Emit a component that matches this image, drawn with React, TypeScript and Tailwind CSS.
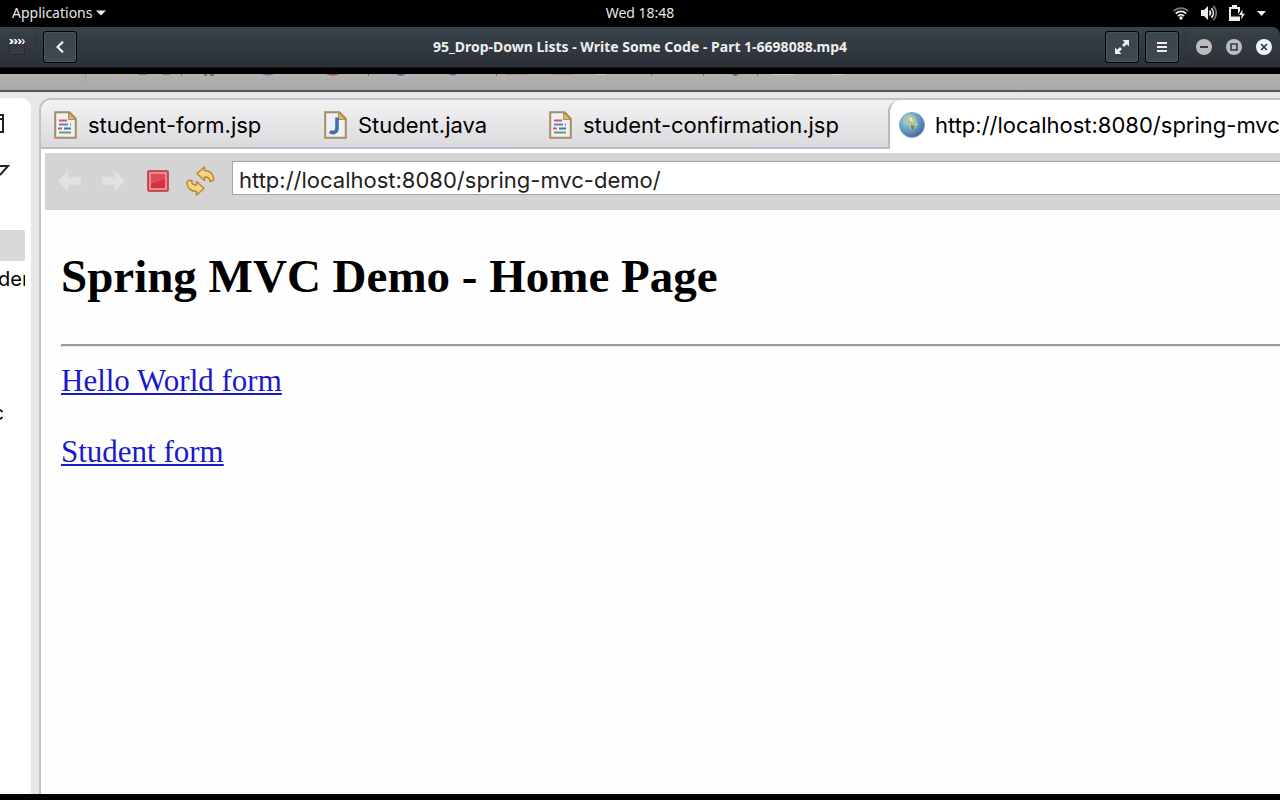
import React from 'react';

function SystemBar() {
  return (
    <header className="grid h-[27px] shrink-0 grid-cols-3 items-center bg-black px-3 pb-px font-['Noto_Sans',sans-serif] text-[14px] leading-5 text-[#e6e6e6]">
      <button type="button" className="flex items-center gap-1 justify-self-start">
        Applications
        <svg width="10" height="6" viewBox="0 0 10 6" fill="#eeeeec" aria-hidden="true">
          <path d="M0 0.5h10L5 5.5z" />
        </svg>
      </button>
      <time className="justify-self-center">Wed 18:48</time>
      <div className="flex items-center gap-3 justify-self-end pr-[2px]">
        <svg width="16" height="13" viewBox="0 0 16 13" fill="none" strokeWidth="1.8" aria-label="Wi-Fi">
          <path d="M0.6 4.2C4.8 0 11.2 0 15.4 4.2" stroke="#777" />
          <path d="M2.8 6.6c3-2.9 7.4-2.9 10.4 0M5 9c1.8-1.7 4.2-1.7 6 0" stroke="#eeeeec" />
          <circle cx="8" cy="11" r="1.7" fill="#eeeeec" />
        </svg>
        <svg width="16" height="16" viewBox="0 0 16 16" fill="none" aria-label="Volume">
          <path d="M0 5h3l4-4v14l-4-4H0z" fill="#eeeeec" />
          <path d="M8.5 5.5c1.2 1.5 1.2 3.5 0 5M10.5 3.2c2.4 2.8 2.4 6.8 0 9.6" stroke="#eeeeec" strokeWidth="1.7" />
          <path d="M12.3 0.8c4 4.2 4 10.2 0 14.4" stroke="#777" strokeWidth="1.7" />
        </svg>
        <svg width="16" height="16" viewBox="0 0 16 16" aria-label="Battery charging">
          <path d="M3 0h5v2h3v4L9 9V4H2v7.500h9V16H0V2h3z" fill="#eeeeec" />
          <path d="M13.500 4.500L10 10h2.600l-.6 4.500L16 8.800h-2.600z" fill="#eeeeec" />
        </svg>
        <svg width="9" height="5" viewBox="0 0 9 5" fill="#eeeeec" aria-hidden="true">
          <path d="M0 0h9L4.500 5z" />
        </svg>
      </div>
    </header>
  );
}

const headerButton =
  'flex h-8 w-[34px] items-center justify-center rounded-[3px] border border-black bg-linear-to-b from-[#3b454e] to-[#404850] shadow-[inset_0_0_0_1px_#4a545d]';

function PlayerHeader() {
  return (
    <div className="bg-black">
      <div className="flex h-10 items-center rounded-tr-lg bg-linear-to-b from-[#394249] to-[#2b3037] px-2">
        <div className="flex flex-1 items-center">
          <svg className="ml-px" width="16" height="16" viewBox="0 0 16 16" aria-hidden="true">
            <rect x="0.5" y="4.500" width="15" height="11" rx="1.5" fill="#3a3a3a" stroke="#292929" />
            <path d="M0 0h2.500L5 2.500 3 5H0l2-2.500zM4.500 0H6.500L9 2.500 7 5H4.500l2-2.500zM8.500 0h2L13 2.500 11 5H8.500l2-2.500zM12.500 0h1.500L16 2.500 14.500 5H12.500l2-2.500z" fill="#eeeeec" />
          </svg>
          <div className="ml-[11px] h-8 w-px bg-[#2d343a]" />
          <button type="button" aria-label="Back" className={`${headerButton} ml-[6px]`}>
            <svg width="8" height="12" viewBox="0 0 8 12" fill="none" stroke="#eeeeec" strokeWidth="2.200">
              <path d="M7 0.700L1.600 6 7 11.300" />
            </svg>
          </button>
        </div>
        <h1 className="font-['Noto_Sans',sans-serif] text-[14px] leading-5 font-bold text-[#eeeeec]">
          95_Drop-Down Lists - Write Some Code - Part 1-6698088.mp4
        </h1>
        <div className="flex flex-1 items-center justify-end">
          <button type="button" aria-label="Fullscreen" className={headerButton}>
            <svg width="14" height="14" viewBox="0 0 14 14" fill="#eeeeec">
              <path d="M7.500 0H14v6.500l-2.200-2.200L9 7 7 5l2.700-2.800zM6.500 14H0V7.500l2.200 2.200L5 7l2 2-2.700 2.800z" />
            </svg>
          </button>
          <button type="button" aria-label="Menu" className={`${headerButton} ml-[6px]`}>
            <svg width="10" height="10" viewBox="0 0 10 10" fill="#eeeeec">
              <path d="M0 0h10v2H0zM0 4h10v2H0zM0 8h10v2H0z" />
            </svg>
          </button>
          <div className="ml-[6px] h-8 w-px bg-[#2d343a]" />
          <div className="ml-[10px] flex gap-[14px]">
            <button type="button" aria-label="Minimize">
              <svg width="16" height="16" viewBox="0 0 16 16">
                <circle cx="8" cy="8" r="8" fill="#bcbcbc" />
                <path d="M4 7h8v2H4z" fill="#343b42" />
              </svg>
            </button>
            <button type="button" aria-label="Maximize">
              <svg width="16" height="16" viewBox="0 0 16 16">
                <circle cx="8" cy="8" r="8" fill="#bcbcbc" />
                <path d="M5 5h6v6H5z" fill="none" stroke="#343b42" strokeWidth="1.600" />
              </svg>
            </button>
            <button type="button" aria-label="Close">
              <svg width="16" height="16" viewBox="0 0 16 16">
                <circle cx="8" cy="8" r="8" fill="#f4f4f4" />
                <path d="M5 5l6 6M11 5l-6 6" stroke="#2e343b" strokeWidth="1.600" />
              </svg>
            </button>
          </div>
        </div>
      </div>
      <div className="h-[7px] border-t border-[#15181c]" />
    </div>
  );
}

function MainToolbarEdge() {
  return (
    <div className="h-[18px] shrink-0 border-b-2 border-[#555] bg-linear-to-b from-[#b3b3b3] to-[#a8a8a8]">
      <svg width="860" height="8" viewBox="0 0 860 8" aria-hidden="true">
        <path d="M85 0h1v8h-1z" fill="#999" />
        <path d="M116 0h9q-4 4-9 0z" fill="#d0a866" />
        <path d="M139 0h8v1h-8zM163 0h7v1h-7zM181 0h1v2h-1zM204 0h3v2h-3zM210 0h4v2h-4zM368 0h1v2h-1zM496 0h1v2h-1zM651 0h1v2h-1zM703 0h1v2h-1zM757 0h1v2h-1z" fill="#777" />
        <path d="M262 0h12q-6 3-12 0z" fill="#777b98" />
        <path d="M326 0h14q-7 3-14 0z" fill="#bd4d5e" />
        <path d="M396 0h10q-5 4-10 0zM449 0h8q-4 3-8 0z" fill="#6b70a5" />
        <path d="M506 0h22v1h-22zM552 0h20v1h-20z" fill="#bb9170" />
        <path d="M595 0h11v1h-11zM771 0h23v1h-23zM832 0h11v1h-11z" fill="#d0ccca" />
        <path d="M732 0h7q-4 4-7 0z" fill="#35836a" />
      </svg>
    </div>
  );
}

function SidePane() {
  return (
    <aside className="w-[31px] shrink-0 overflow-hidden rounded-tr-[10px] bg-white text-[20px] leading-[30px] text-black">
      <svg className="mt-4" width="10" height="64" viewBox="0 0 10 64" fill="none" stroke="#222" strokeWidth="2" aria-hidden="true">
        <path d="M-8 1h11v17H-8M-8 5H3" />
        <path d="M-4 52H8L0 61" />
      </svg>
      <div className="mt-[52px] h-[31px] w-[25px] rounded-r-[2px] bg-[#d8d8d8]" />
      <div className="mt-[3px] w-[25px] overflow-hidden">
        <span className="-ml-[2px]">der</span>
      </div>
      <div className="mt-[104px] flex w-1 justify-end">c</div>
    </aside>
  );
}

function FileIcon({ kind }: { kind: 'jsp' | 'java' }) {
  return (
    <svg className="shrink-0" width="23" height="28" viewBox="0 0 23 28" aria-hidden="true">
      <path d="M1.200 1.200h14.300l6.300 6.500v19.100H1.200z" fill="#eaf1f8" stroke="#a68d5c" strokeWidth="2" />
      <path d="M14.500 1.500v7h7z" fill="#dcb86f" stroke="#b18c4c" />
      {kind === 'jsp' ? (
        <g strokeWidth="1.800">
          <path d="M5 9.500h8" stroke="#d8575c" />
          <path d="M5 13.500h9M16 13.500h1" stroke="#6885a8" />
          <path d="M4 17.500h4" stroke="#d8575c" />
          <path d="M10 17.500h7" stroke="#52739c" />
          <path d="M5 21.500h12" stroke="#58a66d" />
        </g>
      ) : (
        <path d="M13 6.500v10.500c0 4.800-4 5.500-7.200 3.500" fill="none" stroke="#41709f" strokeWidth="3.600" />
      )}
    </svg>
  );
}

function GlobeIcon() {
  return (
    <svg className="shrink-0" width="26" height="26" viewBox="0 0 26 26" aria-hidden="true">
      <defs>
        <radialGradient id="globe" cx="35%" cy="30%" r="75%">
          <stop offset="0" stopColor="#b4dbe0" />
          <stop offset="0.500" stopColor="#6aa6cb" />
          <stop offset="1" stopColor="#4a619f" />
        </radialGradient>
      </defs>
      <circle cx="13" cy="13" r="12.500" fill="url(#globe)" stroke="#7fa3c0" />
      <path d="M8 4l4-1 4 2 1 4 2 3-2 3-3 4-3-3-1-5-4-3z" fill="#b5c597" />
      <path d="M10 5l3 1 1 4-3-1z" fill="#eee6bd" />
      <path d="M12 13l4 1-2 5-2-3z" fill="#6b8a60" />
    </svg>
  );
}

const tabs: { label: string; kind: 'jsp' | 'java'; width: string }[] = [
  { label: 'student-form.jsp', kind: 'jsp', width: 'w-[270px]' },
  { label: 'Student.java', kind: 'java', width: 'w-[225px]' },
  { label: 'student-confirmation.jsp', kind: 'jsp', width: 'w-[352px]' },
];

function EditorTabs() {
  return (
    <div role="tablist" className="flex h-[49px] shrink-0 bg-linear-to-b from-[#f3f2f3] to-[#d9d8dc] text-[22px] leading-7">
      {tabs.map((tab) => (
        <button
          key={tab.label}
          type="button"
          role="tab"
          aria-selected="false"
          className={`${tab.width} flex shrink-0 items-center gap-[11px] border-b-2 border-[#b9b8c6] pt-[3px] pl-[13px] whitespace-nowrap`}
        >
          <FileIcon kind={tab.kind} />
          {tab.label}
        </button>
      ))}
      <button
        type="button"
        role="tab"
        aria-selected="true"
        className="flex min-w-0 flex-1 items-center gap-[10px] overflow-hidden rounded-tl-[12px] border-l-2 border-[#b9b9c2] bg-white pt-px pl-[9px] whitespace-nowrap"
      >
        <GlobeIcon />
        http://localhost:8080/spring-mvc-demo/
      </button>
    </div>
  );
}

function BrowserToolbar() {
  return (
    <div className="mt-1 ml-1 flex h-[57px] shrink-0 items-center bg-[#d4d4d4] pb-px pl-3">
      <button type="button" aria-label="Back" disabled>
        <svg width="26" height="22" viewBox="0 0 26 22">
          <path d="M1 11L11 1v6h13v8H11v6z" fill="#e2e2e2" stroke="#dadada" />
        </svg>
      </button>
      <button type="button" aria-label="Forward" disabled className="ml-[17px]">
        <svg width="26" height="22" viewBox="0 0 26 22">
          <path d="M25 11L15 1v6H2v8h13v6z" fill="#e2e2e2" stroke="#dadada" />
        </svg>
      </button>
      <button type="button" aria-label="Stop" className="ml-[21px]">
        <svg width="22" height="22" viewBox="0 0 22 22">
          <rect x="0.700" y="0.700" width="20.600" height="20.600" rx="1.500" fill="#cc3946" stroke="#c8505a" strokeWidth="1.400" />
          <rect x="3" y="3" width="16" height="16" fill="#d33242" stroke="#f0b0b2" strokeWidth="1.400" />
          <path d="M4 4h14v5L4 14z" fill="#df5862" opacity="0.700" />
        </svg>
      </button>
      <button type="button" aria-label="Refresh" className="ml-[17px]">
        <svg width="29" height="30" viewBox="0 0 29 30" fill="#f5d486" stroke="#bc8732" strokeWidth="1.500" strokeLinejoin="round">
          <path d="M11 7.500L18.500 1v3.500c6 0 9.500 4 9 9.500l-3.500 1.500c0-3-2-4.500-5.500-4.500V14.500z" />
          <path d="M18 22.500L10.500 29v-3.500C4.500 25.500.7 21.500 1 16l1.500-1.500H6c-1 3 1 4.500 4.500 4.500V15.500z" />
        </svg>
      </button>
      <input
        type="text"
        aria-label="Address"
        defaultValue="http://localhost:8080/spring-mvc-demo/"
        className="mt-2 ml-[17px] h-[34px] min-w-0 flex-1 self-start border border-r-0 border-[#a6a6a6] bg-white pt-1 pl-[6px] text-[22px] text-[#222] outline-none"
      />
    </div>
  );
}

function HomePage() {
  return (
    <main className="flex-1 bg-[#fefefe] pt-[38px] pl-5 font-['Liberation_Serif',serif] text-black">
      <h2 className="text-[47px] leading-[56px] font-bold">Spring MVC Demo - Home Page</h2>
      <hr className="mt-10 h-[3px] border-t-2 border-l border-[#9b9b9b] bg-[#ededed]" />
      <div className="mt-4 flex flex-col items-start gap-[35px] text-[31px] leading-9 text-[#1a1acb]">
        <a href="#hello" className="underline decoration-2 underline-offset-2">Hello World form</a>
        <a href="#student" className="underline decoration-2 underline-offset-2">Student form</a>
      </div>
    </main>
  );
}

export default function App() {
  return (
    <div className="flex min-h-screen flex-col overflow-hidden bg-black">
      <SystemBar />
      <PlayerHeader />
      <MainToolbarEdge />
      <div className="mb-[6px] flex flex-1 gap-2 bg-[#e7e7e7] pt-[6px] font-['Inter',sans-serif]">
        <SidePane />
        <section className="flex min-w-0 flex-1 flex-col overflow-hidden rounded-tl-[12px] border-t-2 border-l-2 border-[#c2c2c2] bg-white text-black">
          <EditorTabs />
          <BrowserToolbar />
          <HomePage />
        </section>
      </div>
    </div>
  );
}
